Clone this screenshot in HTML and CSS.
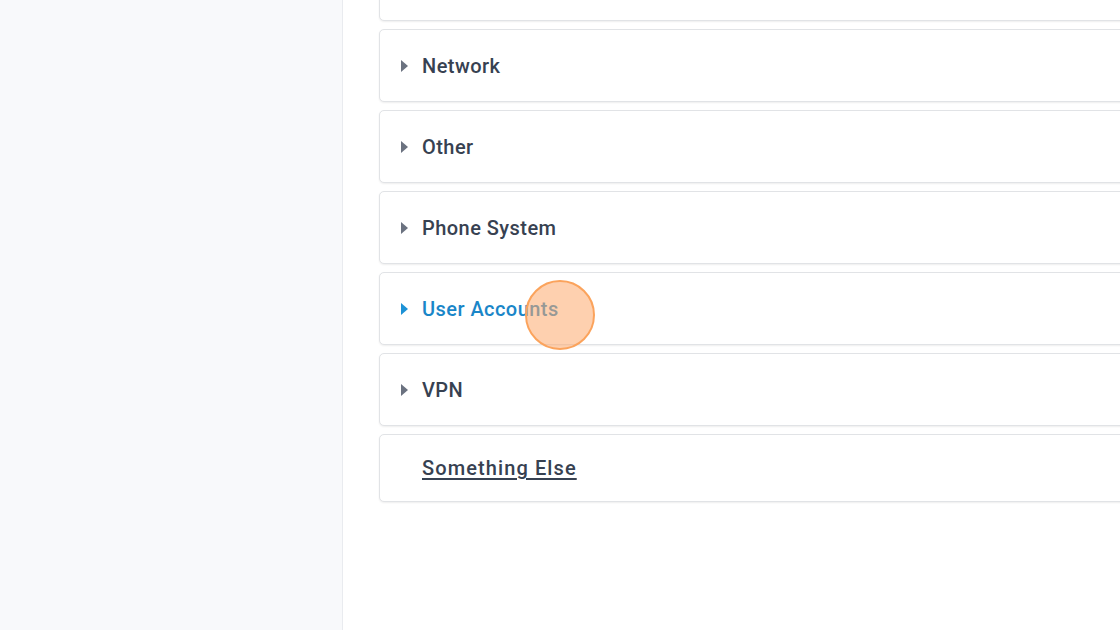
FILE: index.html
```html
<!DOCTYPE html>
<html>
<head>
<meta charset="utf-8">
<link rel="stylesheet" href="styles.css">
</head>
<body>
<div class="layout">
  <aside class="sidebar"></aside>
  <main class="main">
    <div class="list">
      <div class="card card-top"></div>
      <div class="card"><span class="caret"></span><span class="label">Network</span></div>
      <div class="card"><span class="caret"></span><span class="label">Other</span></div>
      <div class="card"><span class="caret"></span><span class="label">Phone System</span></div>
      <div class="card active"><span class="caret"></span><span class="label">User Accounts</span><span class="cursor"></span></div>
      <div class="card"><span class="caret"></span><span class="label">VPN</span></div>
      <div class="card link-card"><a class="link">Something Else</a></div>
    </div>
  </main>
</div>
</body>
</html>
```
FILE: styles.css
```css
html, body {
  margin: 0;
  padding: 0;
  width: 1120px;
  height: 630px;
  overflow: hidden;
  font-family: Roboto, "Liberation Sans", sans-serif;
}
.layout {
  display: flex;
  height: 630px;
}
.sidebar {
  width: 342px;
  flex: none;
  background: #f8f9fb;
  border-right: 1px solid #e9ebef;
}
.main {
  flex: 1;
  background: #fff;
  padding-left: 36px;
  overflow: hidden;
}
.list {
  display: flex;
  flex-direction: column;
  gap: 8px;
  width: 900px;
  margin-top: -52px;
}
.card {
  position: relative;
  height: 71px;
  border: 1px solid #e1e3e6;
  border-radius: 5px;
  background: #fff;
  box-shadow: 0 1px 2px rgba(0,0,0,0.07);
  display: flex;
  align-items: center;
  box-sizing: content-box;
}
.caret {
  width: 0;
  height: 0;
  border-top: 6px solid transparent;
  border-bottom: 6px solid transparent;
  border-left: 7px solid #6b7280;
  margin-left: 21px;
  margin-right: 14px;
}
.label {
  font-size: 20px;
  font-weight: 500;
  color: #374151;
  letter-spacing: 0.45px;
}
.active .caret { border-left-color: #1d92d6; }
.active .label { color: #1a86c8; }
.link-card {
  height: 66px;
}
.link {
  margin-left: 42px;
  font-size: 20px;
  font-weight: 500;
  color: #374151;
  letter-spacing: 1.1px;
  text-decoration: underline;
  text-underline-offset: 3px;
  text-decoration-thickness: 1.5px;
}
.cursor {
  position: absolute;
  left: 145px;
  top: 7px;
  width: 70px;
  height: 70px;
  border-radius: 50%;
  background: rgba(253, 170, 110, 0.55);
  border: 2px solid #fba35c;
  box-sizing: border-box;
  z-index: 2;
}
```
